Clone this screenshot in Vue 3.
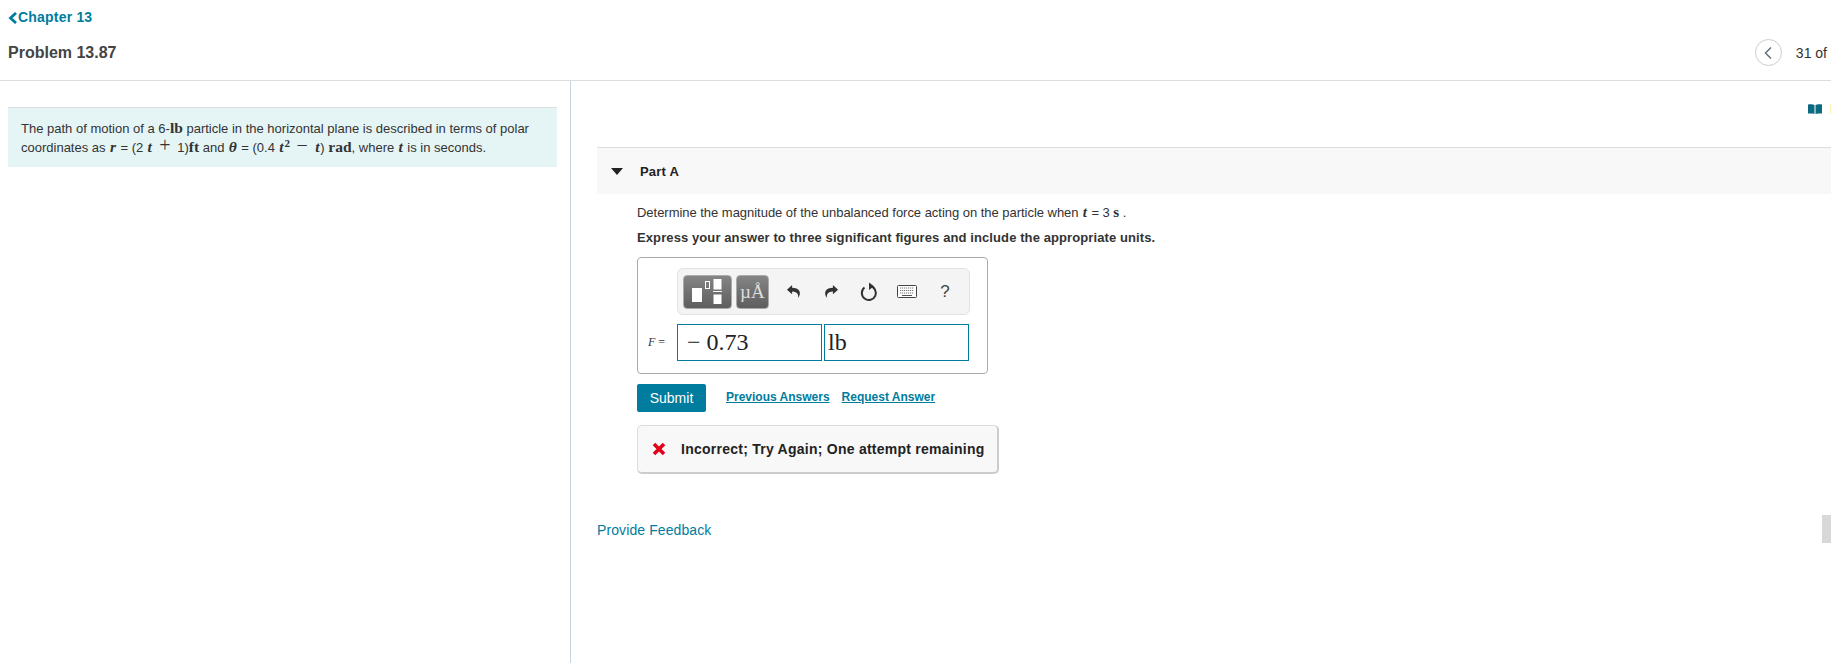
<template>
  <div class="page">
    <header class="top">
      <a class="chapter"><svg class="chev" width="10" height="12" viewBox="0 0 10 12"><path d="M8 1 2.500 6 8 11" fill="none" stroke="#007c9e" stroke-width="2.800"/></svg>Chapter 13</a>
      <div class="title-row">
        <h1>Problem 13.87</h1>
        <div class="pager">
          <button class="round"><svg width="10" height="14" viewBox="0 0 10 14"><path d="M8 1.500 2.500 7 8 12.500" fill="none" stroke="#5f6f7c" stroke-width="1.500"/></svg></button>
          <span class="count">31 of</span>
        </div>
      </div>
    </header>

    <div class="columns">
      <aside class="left">
        <div class="passage">
          The path of motion of a 6-<b class="m">lb</b> particle in the horizontal plane is described in terms of polar
          coordinates as <i class="m mi">r</i> = (2 <i class="m mi">t</i> <span class="m big">+</span> 1)<b class="m">ft</b> and <i class="m mi">θ</i> = (0.4 <i class="m mi">t</i><sup class="m">2</sup> <span class="m big">−</span> <i class="m mi">t</i>) <b class="m">rad</b>, where <i class="m mi">t</i> is in seconds.
        </div>
      </aside>

      <main class="right">
        <div class="book-row">
          <svg width="14" height="10" viewBox="0 0 14 10"><path d="M0 .5C2 0 5 0 6.500 1V10C5 9.300 2 9.300 0 9.500zM14 .5C12 0 9 0 7.500 1V10C9 9.300 12 9.300 14 9.500z" fill="#0b6a80"/></svg>
          <span class="edge"></span>
        </div>
        <section class="part-bar">
          <span class="tri"></span>
          <strong>Part A</strong>
        </section>
        <div class="part-body">
          <p class="q">Determine the magnitude of the unbalanced force acting on the particle when <i class="m mi">t</i> = 3 <b class="m">s</b> .</p>
          <p class="instr">Express your answer to three significant figures and include the appropriate units.</p>

          <div class="answer">
            <div class="toolbar">
              <button class="tmpl wide">
                <svg width="30" height="25" viewBox="0 0 30 25">
                  <rect x="0" y="9" width="10" height="14" fill="#fff"/>
                  <rect x="13.500" y="2.500" width="4" height="7" fill="none" stroke="#fff"/>
                  <rect x="21.500" y="0" width="8" height="10.500" fill="#fff"/>
                  <rect x="21" y="12" width="9" height="1" fill="#fff"/>
                  <rect x="21.500" y="15.500" width="8" height="9.500" fill="#fff"/>
                </svg>
              </button>
              <button class="tmpl unit">µÅ</button>
              <div class="tools">
                <svg width="15" height="15" viewBox="0 0 16 16"><path d="M6.500 1 1 6l5.500 5V8c3 0 5 .8 6 3 .5 1 .6 2 .3 4 2-2.500 2.500-5 1.500-7.500C13 5 10 4 6.500 4z" fill="#333"/></svg>
                <svg width="15" height="15" viewBox="0 0 16 16"><path d="M9.500 1 15 6l-5.500 5V8c-3 0-5 .8-6 3-.5 1-.6 2-.3 4-2-2.500-2.500-5-1.500-7.500C3 5 6 4 9.500 4z" fill="#333"/></svg>
                <svg width="18" height="20" viewBox="0 0 18 20"><path d="M4.500 5.500a7 7 0 1 0 5.500-1.400" fill="none" stroke="#333" stroke-width="2"/><path d="M9 .5V8l5-3.700z" fill="#333"/></svg>
                <svg width="20" height="13" viewBox="0 0 20 13"><rect x=".5" y=".5" width="19" height="12" rx="1" fill="#fff" stroke="#444"/><path d="M3 3h14M3 5.500h14M3 8h14" stroke="#777" stroke-width="1.200" stroke-dasharray="1.200 .8"/><path d="M5 10.500h10" stroke="#555"/></svg>
                <span class="help">?</span>
              </div>
            </div>
            <div class="inputs">
              <span class="lbl"><i>F</i> =</span>
              <div class="field">− 0.73</div>
              <div class="field">lb</div>
            </div>
          </div>

          <div class="actions">
            <button class="submit">Submit</button>
            <a class="link first">Previous Answers</a>
            <a class="link">Request Answer</a>
          </div>

          <div class="feedback">
            <svg width="14" height="14" viewBox="0 0 14 14"><path d="M2 2l10 10M12 2 2 12" stroke="#e2001a" stroke-width="3.600"/></svg>
            <span>Incorrect; Try Again; One attempt remaining</span>
          </div>
        </div>
        <a class="provide">Provide Feedback</a>
        <div class="side-tab"></div>
      </main>
    </div>
  </div>
</template>

<script setup>
</script>

<style>
html, body {
  margin: 0;
  background: #fff;
  overflow: hidden;
}
</style>

<style scoped>
.page {
  height: 663px;
  display: flex;
  flex-direction: column;
  font-family: "Liberation Sans", Arial, sans-serif;
  color: #333;
  overflow: hidden;
}
.top {
  border-bottom: 1px solid #ddd;
  padding: 10px 4px 0 8px;
  flex: none;
  height: 70px;
}
.chapter {
  display: flex;
  align-items: center;
  color: #007c9e;
  font-size: 14px;
  font-weight: bold;
  letter-spacing: .2px;
  line-height: 15px;
}
.title-row {
  display: flex;
  justify-content: space-between;
  align-items: center;
  margin-top: 14px;
}
h1 {
  margin: 0;
  font-size: 16px;
  color: #444;
}
.pager {
  display: flex;
  align-items: center;
  gap: 14px;
}
.round {
  width: 27px;
  height: 27px;
  border-radius: 50%;
  border: 1px solid #ccc;
  background: #fff;
  padding: 0;
  display: flex;
  align-items: center;
  justify-content: center;
}
.count {
  font-size: 14px;
}
.columns {
  flex: 1;
  display: flex;
}
.left {
  width: 571px;
  box-sizing: border-box;
  border-right: 1px solid #c5d3dc;
  padding: 26px 13px 0 8px;
  flex: none;
}
.passage {
  background: #e5f5f6;
  border-top: 1px solid #ddd;
  padding: 11px 13px 0;
  height: 48px;
  font-size: 13px;
  line-height: 19px;
}
.m {
  font-family: "Liberation Serif", serif;
  font-size: 15.500px;
  line-height: 0;
}
.mi {
  font-weight: bold;
  margin: 0 .8px;
}
.big {
  font-size: 20px;
  margin: 0 3px;
}
sup.m {
  font-size: 11px;
  font-weight: bold;
  vertical-align: 5px;
}
.right {
  flex: 1;
  min-width: 0;
  padding-left: 26px;
  position: relative;
}
.book-row {
  height: 66px;
  display: flex;
  justify-content: flex-end;
  align-items: flex-start;
  gap: 8px;
  padding-top: 23px;
  box-sizing: border-box;
}
.edge {
  width: 1px;
  height: 10px;
  background: #ffeebb;
}
.part-bar {
  height: 46px;
  background: #f8f8f8;
  border-top: 1px solid #ddd;
  display: flex;
  align-items: center;
  font-size: 13px;
  letter-spacing: .2px;
  color: #222;
}
.tri {
  width: 0;
  height: 0;
  border-left: 6px solid transparent;
  border-right: 6px solid transparent;
  border-top: 7px solid #222;
  margin: 0 17px 0 14px;
}
.part-body {
  padding: 11px 0 0 40px;
}
.q {
  margin: 0;
  font-size: 13px;
  letter-spacing: -.03px;
  line-height: 16px;
}
.q .m {
  font-size: 15px;
}
.instr {
  margin: 9px 0 0;
  font-size: 13px;
  font-weight: bold;
  letter-spacing: .1px;
  line-height: 16px;
}
.answer {
  width: 351px;
  height: 117px;
  box-sizing: border-box;
  margin-top: 11px;
  border: 1px solid #aaa;
  border-radius: 4px;
  padding: 10px 17px 0 39px;
}
.toolbar {
  height: 47px;
  box-sizing: border-box;
  border: 1px solid #e2e2e2;
  border-radius: 6px;
  background: #f4f4f4;
  display: flex;
  align-items: center;
  padding: 0 5px;
  gap: 4px;
}
.tmpl {
  height: 34px;
  border: 1px solid #aaa;
  border-radius: 4px;
  background: linear-gradient(#858585, #5e5e5e);
  padding: 0;
  display: flex;
  align-items: center;
  justify-content: center;
}
.wide {
  width: 50px;
}
.unit {
  width: 34px;
  color: #ddd;
  font-family: "Liberation Serif", serif;
  font-size: 19px;
}
.tools {
  display: grid;
  grid-template-columns: repeat(5, 38px);
  justify-items: center;
  align-items: center;
  margin-left: 1px;
}
.help {
  font-size: 17px;
  color: #444;
}
.inputs {
  display: flex;
  align-items: center;
  gap: 2px;
  margin-top: 9px;
  position: relative;
}
.lbl {
  position: absolute;
  left: -29px;
  font-family: "Liberation Serif", serif;
  font-size: 12px;
  white-space: nowrap;
}
.field {
  width: 145px;
  height: 37px;
  box-sizing: border-box;
  border: 1px solid #007c9e;
  font-family: "Liberation Serif", serif;
  font-size: 24px;
  line-height: 35px;
  padding-left: 9px;
  color: #222;
  background: #fff;
}
.field + .field {
  padding-left: 3px;
}
.actions {
  display: flex;
  align-items: flex-start;
  margin-top: 10px;
}
.submit {
  width: 69px;
  height: 28px;
  border: 0;
  border-radius: 2px;
  background: #007c9e;
  color: #fff;
  font-family: inherit;
  font-size: 14px;
  padding: 0;
}
.link {
  color: #007c9e;
  font-size: 12px;
  font-weight: bold;
  text-decoration: underline;
  margin-top: 6px;
  margin-left: 12px;
}
.first {
  margin-left: 20px;
}
.feedback {
  width: 362px;
  height: 49px;
  box-sizing: border-box;
  margin-top: 13px;
  border: 1px solid #ddd;
  border-bottom: 2px solid #ccc;
  border-right: 2px solid #ccc;
  border-radius: 5px;
  background: #f8f8f8;
  display: flex;
  align-items: center;
  padding-left: 14px;
  gap: 15px;
  font-size: 14px;
  font-weight: bold;
  letter-spacing: .25px;
  color: #222;
}
.provide {
  display: block;
  margin-top: 48px;
  color: #007c9e;
  font-size: 14px;
  letter-spacing: .1px;
}
.side-tab {
  position: absolute;
  right: 0;
  top: 434px;
  width: 9px;
  height: 28px;
  background: #d8d8d8;
}
</style>
